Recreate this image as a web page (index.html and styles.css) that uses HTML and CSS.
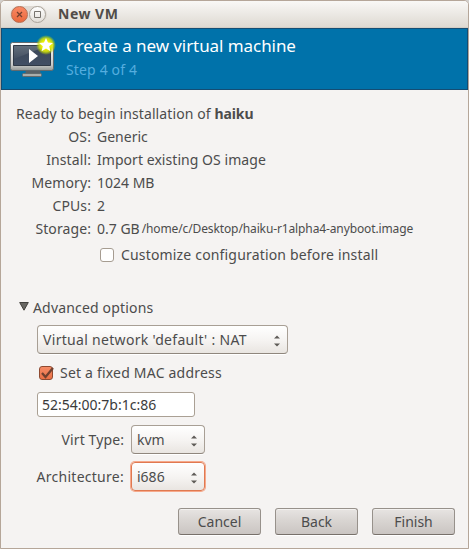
FILE: index.html
```
<!DOCTYPE html>
<html lang="en">
<head>
<meta charset="utf-8">
<title>New VM</title>
<link rel="stylesheet" href="styles.css">
</head>
<body>
<main class="window">
  <header class="titlebar">
    <span class="controls">
      <button class="control close" aria-label="Close"><svg width="15" height="15" viewBox="0 0 15 15"><path d="M5 5l5 5M10 5l-5 5" stroke="#74402f" stroke-width="1.3"/></svg></button>
      <button class="control" aria-label="Maximize"><svg width="15" height="15" viewBox="0 0 15 15"><path d="M4.500 4.500h6v6h-6z" fill="none" stroke="#77736d"/></svg></button>
    </span>
    <h1 class="window-title">New VM</h1>
  </header>
  <section class="banner">
    <svg class="vm-icon" width="50" height="50" viewBox="0 0 50 50">
      <defs>
        <linearGradient id="frame" x2="0" y2="1"><stop stop-color="#fff"/><stop offset=".8" stop-color="#c9cac9"/><stop offset="1" stop-color="#929693"/></linearGradient>
        <linearGradient id="screen" x2="0" y2="1"><stop stop-color="#3b4758"/><stop offset="1" stop-color="#424f64"/></linearGradient>
        <linearGradient id="shine" x2="0" y2="1"><stop stop-color="#78828d"/><stop offset="1" stop-color="#465263"/></linearGradient>
        <radialGradient id="glow"><stop offset=".45" stop-color="#edf000"/><stop offset=".7" stop-color="#d2e20b" stop-opacity=".85"/><stop offset="1" stop-color="#b4d200" stop-opacity="0"/></radialGradient>
      </defs>
      <path d="M17 35h14l1 5H16z" fill="#596167"/>
      <rect x="13.500" y="38.500" width="19" height="3" rx="1" fill="#a9adab" stroke="#626a6c"/>
      <rect x="1.500" y="7.500" width="43" height="28" rx="2" fill="url(#frame)" stroke="#626a6e"/>
      <path d="M4.500 10.500h37v20h-37z" fill="url(#screen)" stroke="#303946"/>
      <path d="M5 11h33L20 18 5 24z" fill="url(#shine)" opacity=".65"/>
      <path d="M20 14v14l9-7z" fill="#fff"/>
      <circle cx="37" cy="10" r="10" fill="url(#glow)"/>
      <path d="M37 3l2 4.600 5 .4-3.800 3.300 1.200 5-4.400-2.700-4.400 2.700 1.200-5L30 8l5-.4z" fill="#fff"/>
    </svg>
    <div>
      <h2 class="heading">Create a new virtual machine</h2>
      <p class="step">Step 4 of 4</p>
    </div>
  </section>
  <section class="content">
    <p class="ready">Ready to begin installation of <b>haiku</b></p>
    <dl class="summary">
      <dt>OS:</dt><dd>Generic</dd>
      <dt>Install:</dt><dd class="install">Import existing OS image</dd>
      <dt>Memory:</dt><dd class="memory">1024 MB</dd>
      <dt>CPUs:</dt><dd>2</dd>
      <dt>Storage:</dt><dd class="storage"><span>0.7 GB</span><small>/home/c/Desktop/haiku-r1alpha4-anyboot.image</small></dd>
    </dl>
    <label class="customize"><span class="box"></span><span>Customize configuration before install</span></label>
    <div class="advanced"><svg width="10" height="9" viewBox="0 0 10 9"><path d="M.7.5h8.600L5 8.200z" fill="#696763" stroke="#43413e"/></svg><span>Advanced options</span></div>
    <div class="options">
      <div class="combo network"><span>Virtual network 'default' : NAT</span><svg class="arrows" width="6" height="12" viewBox="0 0 6 12"><path d="M0 3.500L3 .5l3 3zM0 8.500h6l-3 3z"/></svg></div>
      <label class="fixed"><span class="box checked"><svg width="17" height="17" viewBox="0 0 17 17"><path d="M4 8l3.500 4L15 3" fill="none" stroke="#71402f" stroke-width="2.300"/></svg></span><span>Set a fixed MAC address</span></label>
      <div class="entry">52:54:00:7b:1c:86</div>
    </div>
    <div class="field"><span class="virt">Virt Type:</span><div class="combo"><span>kvm</span><svg class="arrows" width="6" height="12" viewBox="0 0 6 12"><path d="M0 3.500L3 .5l3 3zM0 8.500h6l-3 3z"/></svg></div></div>
    <div class="field"><span class="arch">Architecture:</span><div class="combo focused"><span>i686</span><svg class="arrows" width="6" height="12" viewBox="0 0 6 12"><path d="M0 3.500L3 .5l3 3zM0 8.500h6l-3 3z"/></svg></div></div>
  </section>
  <footer class="actions"><button class="action">Cancel</button><button class="action">Back</button><button class="action">Finish</button></footer>
</main>
</body>
</html>
```
FILE: styles.css
```
* { box-sizing: border-box; }
body { margin: 0; background: #d3d0cc; color: #4c4c4c; font: 14px/23px "Noto Sans", sans-serif; }
h1, h2, p, dl, dd { margin: 0; }
button { font: inherit; color: inherit; padding: 0; }
svg { display: block; flex: none; }
.window { width: 469px; height: 549px; border: 1px solid #b5a699; border-radius: 5px 5px 0 0; background: #f5f3f2; display: flex; flex-direction: column; overflow: hidden; }
.titlebar { height: 27px; flex: none; display: flex; align-items: center; padding-left: 9px; background: linear-gradient(#f9f8f6, #ded9d2); border-bottom: 1px solid #d3cdc5; }
.controls { display: flex; gap: 1px; padding: 0 1px; border-radius: 10px; background: #dfdad4; }
.control { width: 17px; height: 17px; border: 1px solid #aaa49b; border-radius: 50%; background: linear-gradient(#fff, #e2ded8); display: grid; place-items: center; }
.close { background: linear-gradient(#fa8965, #e9683c); border-color: #b86d50; }
.window-title { font-size: 14px; line-height: 24px; font-weight: 700; margin-left: 11px; color: #514d49; letter-spacing: .5px; }
.banner { height: 62px; flex: none; display: flex; background: #0072aa; border: 1px solid #144d74; color: #fff; padding: 6px 0 0 7px; }
.vm-icon { margin-right: 7px; }
.heading { font-size: 17px; line-height: 22px; font-weight: 400; letter-spacing: -.07px; }
.step { color: #54addf; line-height: 25px; letter-spacing: .15px; }
.content { padding: 12px 0 0 15px; }
.ready { letter-spacing: .1px; }
.ready b { letter-spacing: -.1px; }
.summary { display: grid; grid-template-columns: 75px 1fr; grid-auto-rows: 23px; column-gap: 6px; }
dt { text-align: right; letter-spacing: .1px; }
.install { letter-spacing: .05px; }
.storage { display: flex; gap: 2px; }
small { font-size: 12px; letter-spacing: -.12px; line-height: 24px; }
.customize { display: flex; align-items: center; margin: 3px 0 0 84px; gap: 7px; letter-spacing: .17px; }
.box { display: block; width: 14px; height: 14px; border: 1px solid #a69c91; border-radius: 3px; background: #fff; }
.checked { background: linear-gradient(#f58b66, #ea7045); border-color: #8f4a31; }
.checked svg { margin: -2px 0 0 -2px; }
.advanced { display: flex; gap: 4px; margin: 30px 0 0 3px; letter-spacing: .17px; }
.advanced svg { margin-top: 6px; }
.options { margin: 6px 0 0 21px; }
.combo { width: 74px; height: 29px; border: 1px solid #a89f95; border-bottom-color: #8f867d; border-radius: 4px; background: linear-gradient(#fff, #f5f3f1 55%, #e9e5e1); display: flex; justify-content: space-between; align-items: center; padding: 0 7px 0 5px; box-shadow: 0 1px #fff; }
.arrows { fill: #5e5b57; margin-top: 3px; }
.network { width: 251px; letter-spacing: .31px; }
.fixed { display: flex; align-items: center; gap: 7px; margin: 7px 0 0 2px; letter-spacing: .2px; }
.entry { width: 158px; height: 25px; border: 1px solid #aaa094; border-radius: 3px; background: #fff; margin-top: 8px; padding-left: 4px; color: #3b3b3b; line-height: 24px; }
.field { display: flex; align-items: center; margin-top: 8px; gap: 7px; }
.field > span { width: 108px; text-align: right; }
.virt { letter-spacing: .1px; }
.arch { letter-spacing: .27px; }
.focused { border: 1px solid #e07951; box-shadow: 0 0 0 1px #f6a98b; }
.actions { display: flex; justify-content: flex-end; gap: 14px; margin: auto 13px 13px 0; }
.action { width: 83px; height: 27px; border: 1px solid #97918b; border-bottom-color: #77706a; border-radius: 3px; background: linear-gradient(#e7e4e2, #d9d5d2 45%, #cac5c2); box-shadow: inset 0 1px #f3f1f0, 0 1px #fff; }
```
